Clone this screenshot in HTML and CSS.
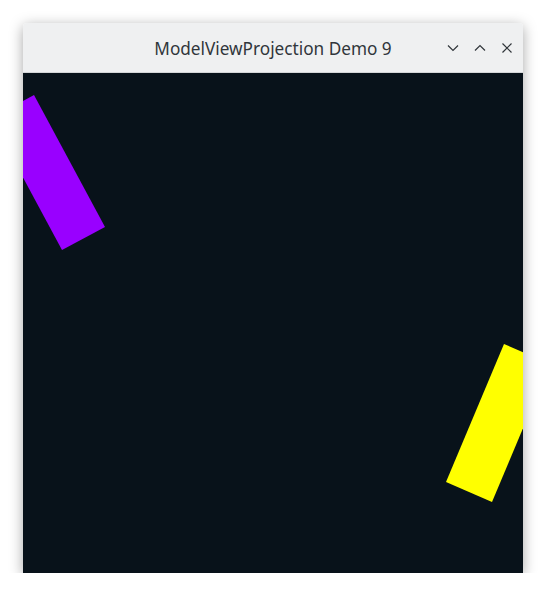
FILE: index.html
```html
<!DOCTYPE html>
<html>
<head>
<meta charset="utf-8">
<link rel="stylesheet" href="styles.css">
</head>
<body>
<div class="window">
  <div class="titlebar">
    <div class="title">ModelViewProjection Demo 9</div>
    <div class="buttons">
      <svg class="btn" width="12" height="12" viewBox="0 0 12 12"><path d="M1 3.5 L6 8.5 L11 3.5" fill="none" stroke="#31363b" stroke-width="1.2"/></svg>
      <svg class="btn" width="12" height="12" viewBox="0 0 12 12"><path d="M1 8.5 L6 3.5 L11 8.5" fill="none" stroke="#31363b" stroke-width="1.2"/></svg>
      <svg class="btn" width="12" height="12" viewBox="0 0 12 12"><path d="M1.5 1.5 L10.5 10.5 M10.5 1.5 L1.5 10.5" fill="none" stroke="#31363b" stroke-width="1.2"/></svg>
    </div>
  </div>
  <svg class="canvas" width="500" height="500" viewBox="0 0 500 500">
    <rect width="500" height="500" fill="#08121a"/>
    <polygon points="11,22 82,154 39,177 -32,45" fill="#9900ff"/>
    <polygon points="481,271 527,291 469,429 423,409" fill="#ffff00"/>
  </svg>
</div>
</body>
</html>
```
FILE: styles.css
```css
html, body {
  margin: 0;
  padding: 0;
  background: #ffffff;
}
body {
  padding: 23px 0 0 23px;
}
.window {
  width: 500px;
  display: flex;
  flex-direction: column;
  border-radius: 4px 4px 0 0;
  overflow: hidden;
  box-shadow: 0 3px 14px rgba(0,0,0,0.35);
}
.titlebar {
  height: 49px;
  background: #eff0f1;
  border-bottom: 1px solid #d4d6d8;
  position: relative;
  display: flex;
  align-items: center;
  justify-content: center;
}
.title {
  font-family: "Noto Sans", sans-serif;
  font-size: 17.2px;
  color: #31363b;
  padding-top: 1px;
}
.buttons {
  position: absolute;
  right: 10px;
  top: 19px;
  display: flex;
  gap: 15px;
}
.btn {
  display: block;
}
.canvas {
  display: block;
}
```
